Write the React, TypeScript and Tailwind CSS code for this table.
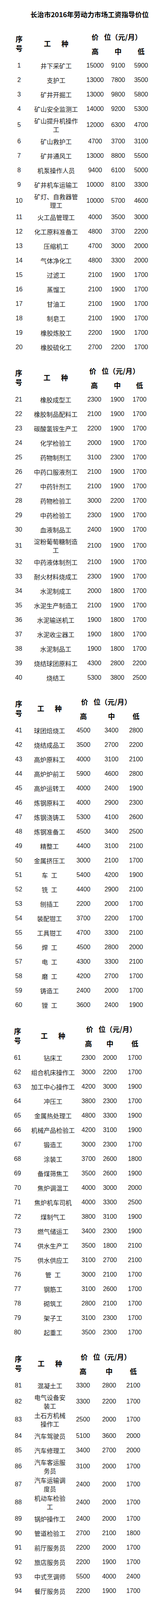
import React from "react";

type Row = [number, string, number, number, number];

type Section = {
  mt: string;
  seq: string;
  name: string;
  p1: string;
  p2: string;
  p3: string;
  hdr: string;
  seqOneLine?: boolean;
  rows: Row[];
};

// "|" marks where the job name wraps to a second line
const sections: Section[] = [
  {
    mt: "",
    seq: "ml-[19px]",
    name: "ml-[7px] w-[116px]",
    p1: "ml-[17px]",
    p2: "ml-[9px]",
    p3: "ml-[9px]",
    hdr: "pl-[16px]",
    rows: [
      [1, "井下采矿工", 15000, 9100, 5900],
      [2, "支护工", 13000, 7800, 3500],
      [3, "矿井开掘工", 13000, 9800, 5800],
      [4, "矿山安全监测工", 14000, 9200, 5300],
      [5, "矿山提升机操作|工", 12000, 6300, 4700],
      [6, "矿山救护工", 4700, 3700, 3100],
      [7, "矿井通风工", 13000, 8800, 5500],
      [8, "机泵操作人员", 9400, 6100, 5000],
      [9, "矿井机车运输工", 10000, 8100, 3300],
      [10, "矿灯、自救器管|理工", 10000, 5700, 4600],
      [11, "火工品管理工", 4000, 3500, 3000],
      [12, "化工原料准备工", 4800, 3700, 2200],
      [13, "压缩机工", 4700, 3000, 2000],
      [14, "气体净化工", 4800, 3300, 2000],
      [15, "过滤工", 2100, 1900, 1700],
      [16, "蒸馏工", 2100, 1900, 1700],
      [17, "甘油工", 2100, 1900, 1700],
      [18, "制皂工", 2100, 1900, 1700],
      [19, "橡胶炼胶工", 2200, 1900, 1700],
      [20, "橡胶硫化工", 2700, 2200, 1700],
    ],
  },
  {
    mt: "mt-[23px]",
    seq: "ml-[18px]",
    name: "ml-[7px] w-[116px]",
    p1: "ml-[16px]",
    p2: "ml-[9px]",
    p3: "ml-[7px]",
    hdr: "pl-[12px]",
    rows: [
      [21, "橡胶成型工", 2300, 1900, 1700],
      [22, "橡胶制品配料工", 2100, 1900, 1700],
      [23, "碳酸氢铵生产工", 2200, 1900, 1700],
      [24, "化学检验工", 2000, 1900, 1700],
      [25, "药物制剂工", 3100, 2300, 1700],
      [26, "中药口服液剂工", 2100, 1900, 1700],
      [27, "中药针剂工", 2100, 1900, 1700],
      [28, "药物检验工", 3000, 2200, 1700],
      [29, "中药检验工", 2300, 1900, 1700],
      [30, "血液制品工", 2400, 1900, 1700],
      [31, "淀粉葡萄糖制造|工", 2100, 1900, 1700],
      [32, "中药液体制剂工", 2100, 1900, 1700],
      [33, "耐火材料烧成工", 2300, 1900, 1700],
      [34, "水泥制成工", 2000, 1800, 1700],
      [35, "水泥生产制造工", 2100, 1900, 1700],
      [36, "水泥输送机工", 1900, 1800, 1700],
      [37, "水泥收尘器工", 1900, 1800, 1700],
      [38, "水泥制品工", 1900, 1800, 1700],
      [39, "烧结球团原料工", 4300, 2800, 2200],
      [40, "烧结工", 5300, 3800, 2500],
    ],
  },
  {
    mt: "mt-[24px]",
    seq: "ml-[18px]",
    name: "ml-[1px] w-[96px]",
    p1: "ml-[14px]",
    p2: "ml-[22px]",
    p3: "ml-[13px]",
    hdr: "pl-[19px]",
    rows: [
      [41, "球团焙烧工", 4500, 3400, 2800],
      [42, "烧结成品工", 3500, 2700, 2200],
      [43, "高炉原料工", 4000, 3100, 2100],
      [44, "高炉炉前工", 5900, 4600, 2800],
      [45, "高炉运转工", 4000, 2400, 1900],
      [46, "炼钢原料工", 4000, 2900, 2300],
      [47, "炼钢浇铸工", 5300, 4100, 2600],
      [48, "炼钢准备工", 4500, 3400, 2500],
      [49, "精整工", 4400, 3100, 2100],
      [50, "金属挤压工", 3000, 2100, 1700],
      [51, "车 工", 5400, 4200, 1900],
      [52, "铣 工", 4400, 2900, 2100],
      [53, "刨插工", 2200, 2000, 1700],
      [54, "装配钳工", 3700, 2200, 1700],
      [55, "工具钳工", 4700, 3300, 2100],
      [56, "焊 工", 4500, 2800, 2000],
      [57, "电 工", 4300, 3300, 2100],
      [58, "磨 工", 4200, 2700, 1700],
      [59, "铸造工", 2400, 2000, 1700],
      [60, "镗 工", 3600, 2400, 1900],
    ],
  },
  {
    mt: "mt-[24px]",
    seq: "ml-[15px]",
    name: "ml-[3px] w-[116px]",
    p1: "ml-[8px]",
    p2: "ml-[5px]",
    p3: "ml-[14px]",
    hdr: "pl-[19px]",
    rows: [
      [61, "钻床工", 2300, 2000, 1700],
      [62, "组合机床操作工", 3000, 2200, 1700],
      [63, "加工中心操作工", 4200, 3000, 1900],
      [64, "冲压工", 3800, 2300, 1700],
      [65, "金属热处理工", 4800, 3300, 1900],
      [66, "机械产品检验工", 4200, 3100, 1900],
      [67, "锻造工", 3000, 2300, 1700],
      [68, "涂装工", 3700, 2600, 1800],
      [69, "备煤筛焦工", 3500, 2600, 1900],
      [70, "焦炉调温工", 4000, 3000, 2000],
      [71, "焦炉机车司机", 4000, 3300, 2500],
      [72, "煤制气工", 3800, 3100, 1900],
      [73, "燃气储运工", 3400, 2300, 1900],
      [74, "供水生产工", 3500, 1800, 2100],
      [75, "供水供应工", 3100, 2700, 2100],
      [76, "管 工", 3000, 2100, 1700],
      [77, "钢筋工", 3100, 2600, 1700],
      [78, "砌筑工", 2800, 2100, 1700],
      [79, "架子工", 3100, 2300, 1700],
      [80, "起重工", 3500, 2300, 1700],
    ],
  },
  {
    mt: "mt-[25px]",
    seq: "ml-[17px]",
    name: "ml-[7px] w-[88px]",
    p1: "ml-[16px]",
    p2: "ml-[17px]",
    p3: "ml-[12px]",
    hdr: "pl-[19px]",
    rows: [
      [81, "混凝土工", 3300, 2800, 2100],
      [82, "电气设备安|装工", 3300, 2200, 1700],
      [83, "土石方机械|操作工", 2500, 2000, 1700],
      [84, "汽车驾驶员", 5100, 3600, 2000],
      [85, "汽车修理工", 3400, 2700, 2000],
      [86, "汽车客运服|务员", 3100, 2000, 1700],
      [87, "汽车运输调|度员", 2400, 2000, 1700],
      [88, "机动车检验|工", 2400, 2000, 1700],
      [89, "锅炉操作工", 2400, 2000, 1700],
      [90, "管道检验工", 2700, 2100, 1800],
      [91, "前厅服务员", 2200, 2000, 1700],
      [92, "旅店服务员", 2200, 1900, 1700],
      [93, "中式烹调师", 5500, 4000, 2400],
      [94, "餐厅服务员", 2200, 1900, 1700],
      [95, "保健按摩师", 3000, 2400, 1900],
      [96, "美发师", 2900, 2100, 1700],
      [97, "银行信贷员", 10000, 4800, 3600],
      [98, "银行信托业|务员", 11000, 6500, 4400],
      [99, "银行信用卡|业务员", 9200, 6700, 4000],
      [100, "银行储蓄员", 9300, 6500, 4900],
    ],
  },
  {
    mt: "mt-[23px]",
    seq: "ml-[20px]",
    name: "ml-[9px] w-[116px]",
    p1: "ml-[11px]",
    p2: "ml-[4px]",
    p3: "ml-[12px]",
    hdr: "pl-[18px]",
    seqOneLine: true,
    rows: [
      [101, "保险推销员", 5700, 3300, 2000],
      [102, "保险理赔员", 4000, 3200, 2000],
      [103, "营业员", 2100, 1900, 1700],
      [104, "采购员", 2200, 1900, 1700],
      [105, "收银员", 2000, 1900, 1700],
      [106, "企业职能部门经|理或主管", 1600, 4500, 2300],
      [107, "会计人员", 6700, 3500, 2000],
      [108, "打字员", 2900, 2100, 1700],
      [109, "计算机操作员", 5800, 4800, 2100],
      [110, "统计人员", 5800, 2800, 1700],
      [111, "保管员", 5800, 3300, 1800],
      [112, "包装人员", 2100, 1900, 1700],
    ],
  },
];

const JobName = ({ text }: { text: string }) => (
  <>
    {text.split("|").map((line) => (
      <span key={line} className="block h-[22px] whitespace-nowrap">
        {line.split(" ").map((part, i) => (
          <React.Fragment key={i}>
            {i > 0 && <span className="inline-block w-[8px]" />}
            {part}
          </React.Fragment>
        ))}
      </span>
    ))}
  </>
);

const Table = ({ s }: { s: Section }) => (
  <div className={`${s.mt} flex flex-col`}>
    {/* header */}
    <div className="flex h-[74px] shrink-0 overflow-hidden font-bold text-[18px] leading-[24px] text-black font-['Noto_Sans_CJK_SC',sans-serif]">
      <div className={`${s.seq} w-[60px] flex flex-col items-center justify-center pb-[3px]`}>
        {s.seqOneLine ? (
          <span>序号</span>
        ) : (
          <>
            <span>序</span>
            <span>号</span>
          </>
        )}
      </div>
      <div className={`${s.name} flex items-center justify-center gap-[27px] pb-[3px]`}>
        <span>工</span>
        <span>种</span>
      </div>
      <div className={`${s.p1} flex flex-col`}>
        <div className={`${s.hdr} h-[37px] flex items-center whitespace-nowrap`}>
          <span>价</span>
          <span className="ml-[14px]">位（元/月）</span>
        </div>
        <div className="h-[37px] flex items-center">
          <span className="w-[50px] text-center">高</span>
          <span className={`${s.p2} w-[50px] text-center`}>中</span>
          <span className={`${s.p3} w-[50px] text-center`}>低</span>
        </div>
      </div>
    </div>

    {/* rows */}
    {s.rows.map(([n, name, hi, mid, lo]) => (
      <div
        key={n}
        className={`flex items-center shrink-0 overflow-hidden text-[16px] leading-[22px] text-[#222] ${
          name.includes("|") ? "h-[46px]" : "h-[37px]"
        }`}
      >
        <div className={`${s.seq} w-[60px] text-center`}>{n}</div>
        <div className={`${s.name} text-center font-['Noto_Sans_CJK_SC',sans-serif]`}>
          <JobName text={name} />
        </div>
        <div className={`${s.p1} w-[50px] text-center`}>{hi}</div>
        <div className={`${s.p2} w-[50px] text-center`}>{mid}</div>
        <div className={`${s.p3} w-[50px] text-center`}>{lo}</div>
      </div>
    ))}
  </div>
);

export default function App() {
  return (
    <div className="w-[426px] bg-white pb-[21px] font-['Liberation_Sans','Noto_Sans_CJK_SC',sans-serif]">
      <div className="h-[75px] flex items-center pl-[78px] whitespace-nowrap text-[17.5px] font-bold text-black font-['Noto_Sans_CJK_SC',sans-serif]">
        长治市2016年劳动力市场工资指导价位
      </div>
      {sections.map((s) => (
        <Table key={s.rows[0][0]} s={s} />
      ))}
    </div>
  );
}
